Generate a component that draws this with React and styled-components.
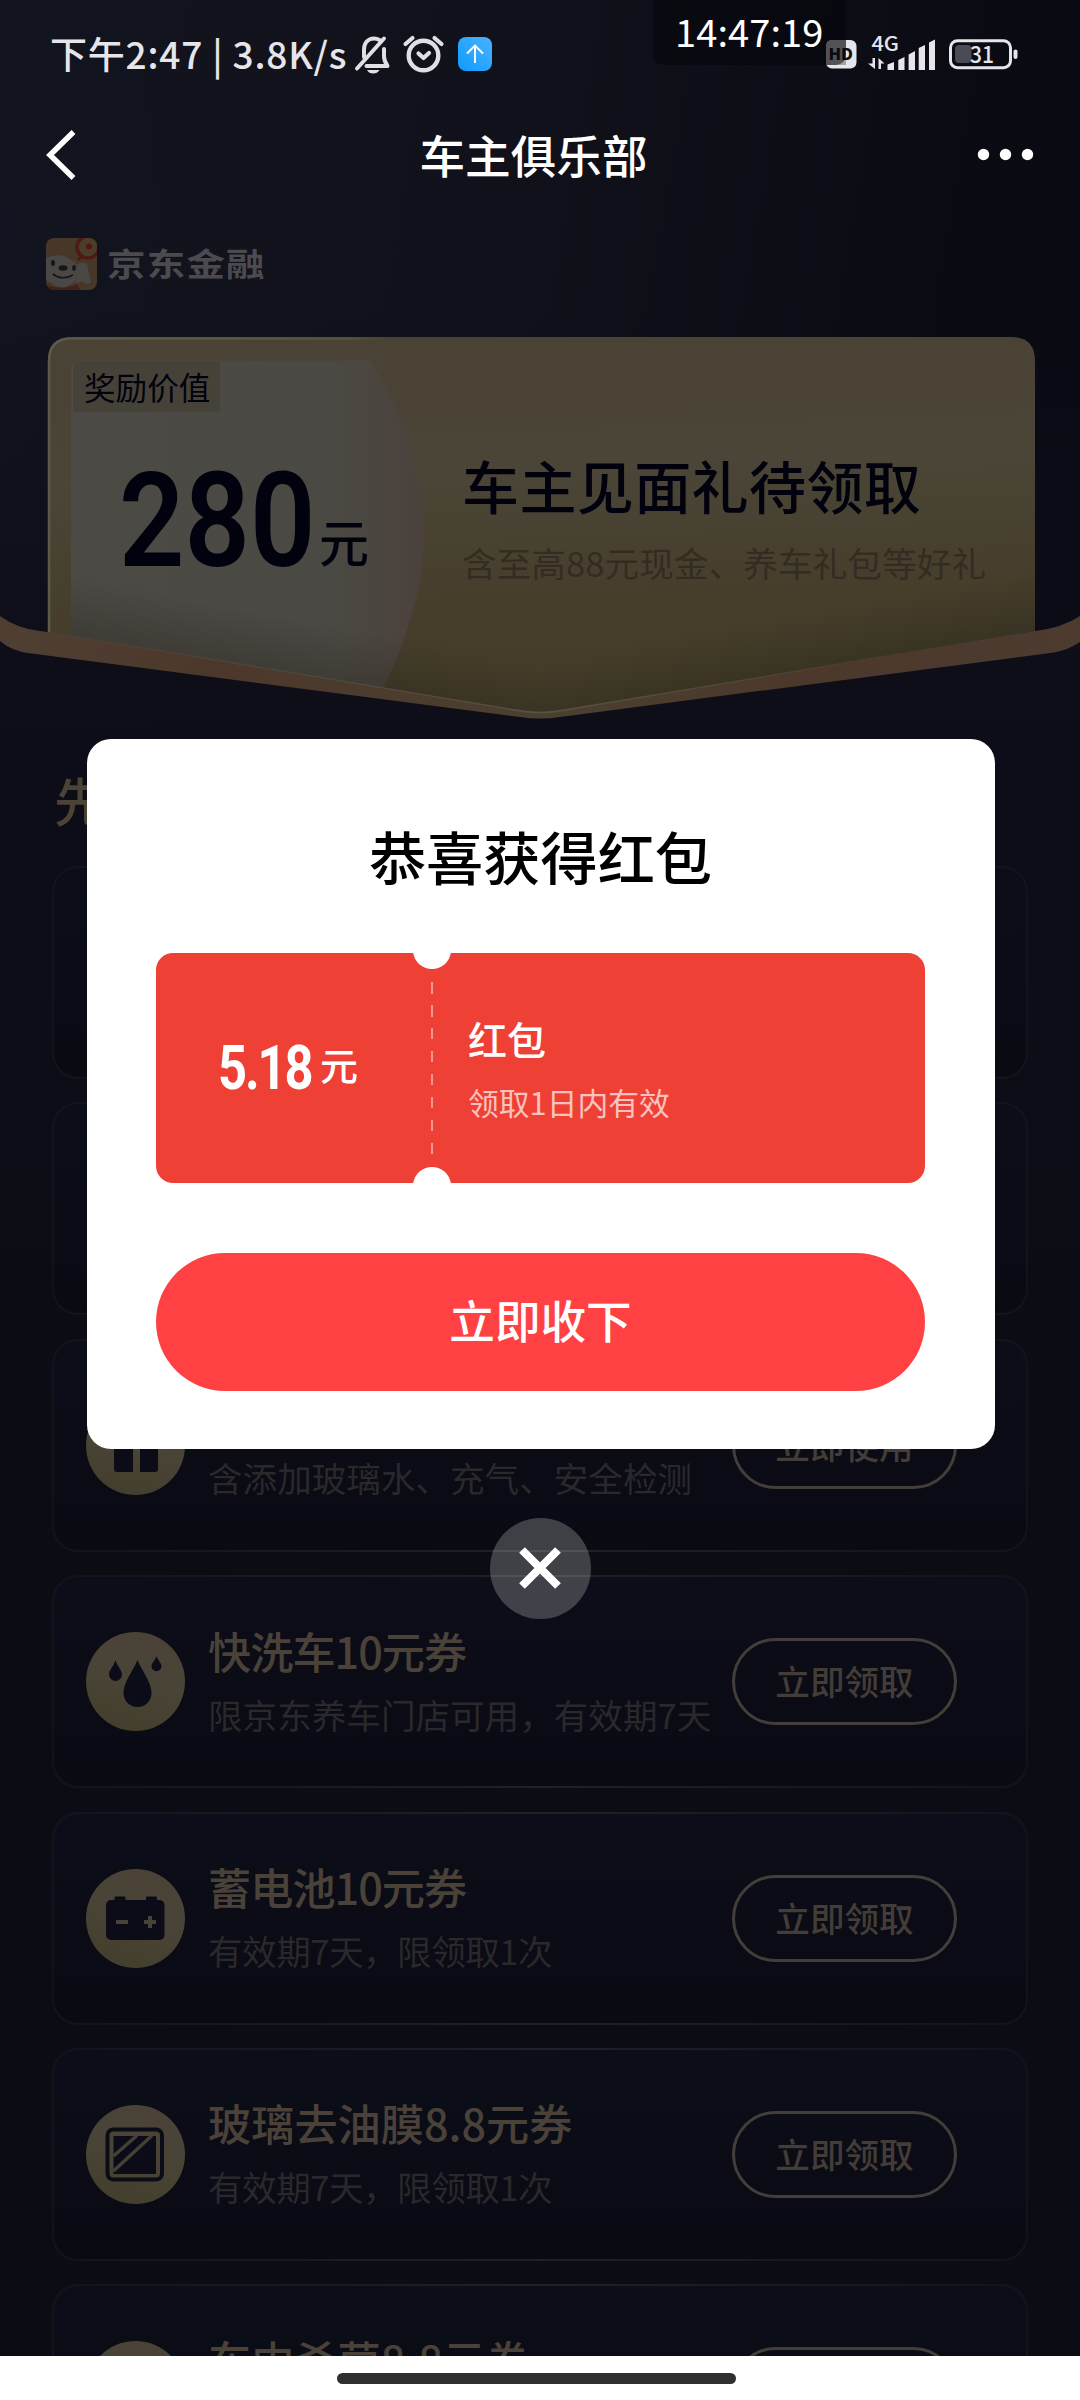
import React from "react";
import styled, { createGlobalStyle } from "styled-components";

const Global = createGlobalStyle`
  body { margin: 0; background: #0b0c14; }
  * { box-sizing: border-box; }
  #root { font-family: "Noto Sans CJK SC", sans-serif; }
`;

const Screen = styled.div`
  position: relative;
  display: flex;
  flex-direction: column;
  width: 1080px;
  height: 2400px;
  overflow: hidden;
  background:
    radial-gradient(ellipse 220px 400px at 0 220px, rgba(14, 20, 44, 0.2), transparent),
    linear-gradient(180deg, rgba(13, 14, 24, 0) 300px, #0c0d18 760px, #0b0c14 1300px),
    linear-gradient(100deg, #13141e 0%, #10111a 45%, #090a12 85%) 0 0 / 100% 800px no-repeat;
  & > * { flex-shrink: 0; }
`;

const StatusBar = styled.header`
  display: flex;
  align-items: center;
  height: 110px;
  padding: 0 50px;
  color: #e6e6ea;
`;
const StatusText = styled.span`
  width: 300px;
  padding-bottom: 4px;
  font-size: 37px;
  font-weight: 500;
  line-height: 40px;
  letter-spacing: ${(p) => p.$track || 0}px;
  white-space: nowrap;
`;
const StatusIcons = styled.div`
  display: flex;
  flex: none;
  align-items: center;
  margin-left: ${(p) => p.$ml}px;
`;
const Clock = styled.div`
  position: absolute;
  left: 653px;
  top: 0;
  width: 193px;
  height: 65px;
  padding-left: 22px;
  border-radius: 0 0 10px 10px;
  background: rgba(3, 4, 10, 0.5);
  color: #fff;
  font-size: 38px;
  line-height: 62px;
  letter-spacing: 0.1px;
  white-space: nowrap;
`;

const NavBar = styled.nav`
  display: flex;
  align-items: center;
  height: 90px;
  padding: 0 46px;
`;
const NavTitle = styled.h1`
  flex: 1;
  margin: 0 0 3px 15px;
  color: #fff;
  font-size: 45.6px;
  font-weight: 500;
  line-height: 86px;
  text-align: center;
`;

const Brand = styled.div`
  display: flex;
  align-items: center;
  gap: 10px;
  height: 52px;
  margin: 38px 0 47px 46px;
`;
const BrandName = styled.span`
  color: #4b4b4f;
  font-size: 38.5px;
  font-weight: 700;
  line-height: 52px;
  letter-spacing: 1.2px;
  transform: translateY(-2px) scaleY(0.84);
`;

const Hero = styled.section`
  position: relative;
  display: grid;
  grid-template-columns: 391px 1fr;
  height: 383px;
  padding: 24px 45px 0 71px;
  color: #02020e;
`;
const HeroArt = styled.svg`
  position: absolute;
  left: 0;
  top: 0;
`;
const Reward = styled.div`
  position: relative;
  display: flex;
  flex-direction: column;
  align-items: flex-start;
`;
const RewardTag = styled.span`
  height: 51px;
  margin-left: 2px;
  padding: 0 10px 0 11px;
  background: rgba(67, 62, 50, 0.6);
  border-radius: 8px 0 4px 0;
  font-size: 31.6px;
  line-height: 50px;
`;
const RewardValue = styled.div`
  display: flex;
  align-items: flex-end;
  margin: 45px 0 0 48px;
  height: 130px;
`;
const Digits = styled.span`
  display: inline-block;
  width: ${(p) => p.$w}px;
  font-family: Roboto, sans-serif;
  font-size: ${(p) => p.$size}px;
  font-weight: ${(p) => p.$weight || 600};
  line-height: 1;
  letter-spacing: ${(p) => p.$track || 0}px;
  transform: scaleX(${(p) => p.$stretch});
  transform-origin: left;
  white-space: nowrap;
`;
const Yuan = styled.span`
  margin-bottom: ${(p) => p.$lift || 0}px;
  font-size: ${(p) => p.$size}px;
  font-weight: 500;
  line-height: 1;
`;
const HeroText = styled.div`
  position: relative;
  padding-top: 83px;
`;
const HeroTitle = styled.h2`
  margin: 0;
  font-size: 57px;
  font-weight: 500;
  line-height: 80px;
  letter-spacing: 0.4px;
  white-space: nowrap;
`;
const HeroSub = styled.p`
  margin: 13px 0 0;
  color: #342c22;
  font-size: 34.6px;
  line-height: 50px;
  letter-spacing: 0.1px;
  white-space: nowrap;
`;

const SectionTitle = styled.h3`
  margin: 39px 0 25px 54px;
  color: #4b4436;
  font-size: 52px;
  font-weight: 500;
  line-height: 82px;
`;
const List = styled.div`
  display: flex;
  flex-direction: column;
  gap: 23.4px;
  padding: 0 52px;
`;
const Card = styled.article`
  display: flex;
  align-items: center;
  flex: none;
  height: 213px;
  padding: 0 69px 0 32px;
  border: 2px solid transparent;
  border-radius: 26px;
  background:
    linear-gradient(180deg, #0b0d18, #0a0a13) padding-box,
    linear-gradient(90deg, #13131b, #212026 50%, #13131b) border-box;
`;
const IconDisc = styled.svg`
  flex: none;
  width: 99px;
  height: 99px;
`;
const CardBody = styled.div`
  flex: 1;
  min-width: 0;
  margin-left: 23px;
  white-space: nowrap;
`;
const CardTitle = styled.h4`
  margin: 0;
  color: #4a4238;
  font-size: 43.2px;
  font-weight: 500;
  line-height: 64px;
  letter-spacing: ${(p) => p.$track || 0}px;
`;
const CardSub = styled.p`
  margin: 0;
  color: #29282b;
  font-size: 34.6px;
  line-height: 64px;
  letter-spacing: ${(p) => p.$track || 0}px;
`;
const Pill = styled.button`
  flex: none;
  width: 225px;
  height: 87px;
  padding: 0 0 3px;
  border: 3px solid #433e39;
  border-radius: 44px;
  background: transparent;
  color: #433c37;
  font: 500 34.6px/78px "Noto Sans CJK SC", sans-serif;
`;

const HomeBar = styled.footer`
  position: absolute;
  left: 0;
  bottom: 0;
  display: flex;
  justify-content: center;
  width: 100%;
  height: 44px;
  padding-top: 17px;
  background: #fff;
  &::after {
    content: "";
    width: 399px;
    height: 11px;
    margin-right: 7px;
    border-radius: 6px;
    background: #303030;
  }
`;

const Overlay = styled.div`
  position: absolute;
  inset: 0;
  display: flex;
  flex-direction: column;
  align-items: center;
  padding-top: 739px;
`;
const Modal = styled.section`
  display: flex;
  flex-direction: column;
  width: 908px;
  height: 710px;
  margin-left: 2px;
  padding: 76px 70px 0 69px;
  border-radius: 24px;
  background: #fff;
`;
const ModalTitle = styled.h2`
  margin: 0;
  color: #000;
  font-size: 57.2px;
  font-weight: 500;
  line-height: 80px;
  text-align: center;
`;
const Coupon = styled.div`
  display: flex;
  height: 230px;
  margin-top: 58px;
  border-radius: 17px;
  color: #fff;
  background:
    radial-gradient(circle at 276px -3px, #fff 18.5px, transparent 19.5px),
    radial-gradient(circle at 276px 233px, #fff 18.5px, transparent 19.5px),
    #ef4035;
`;
const Amount = styled.div`
  display: flex;
  align-items: center;
  width: 275px;
  padding-left: 62px;
`;
const Perforation = styled.div`
  width: 2px;
  height: 174px;
  margin-top: 29px;
  background: repeating-linear-gradient(180deg, #f6968e 0 11.5px, transparent 11.5px 23px);
`;
const CouponInfo = styled.div`
  padding: 57px 0 0 35px;
`;
const CouponName = styled.div`
  font-size: 39px;
  font-weight: 500;
  line-height: 56px;
`;
const CouponTerm = styled.div`
  margin-top: 14px;
  color: #fac3bf;
  font-size: 30.8px;
  line-height: 44px;
`;
const Accept = styled.button`
  height: 138px;
  margin-top: 70px;
  padding: 0 0 6px;
  border: 0;
  border-radius: 69px;
  background: #ff4144;
  color: #fff;
  font: 500 45.6px/132px "Noto Sans CJK SC", sans-serif;
`;
const Close = styled.button`
  display: flex;
  align-items: center;
  justify-content: center;
  width: 101px;
  height: 101px;
  margin-top: 69px;
  padding: 0 0 2px;
  border: 0;
  border-radius: 50%;
  background: rgba(255, 255, 255, 0.22);
`;

const INK = "#0b0c18";
const glyphs = {
  gift: (
    <g fill={INK}>
      <rect x="25" y="29" width="49" height="15" rx="3" />
      <path d="M28 47h19v29H31q-3 0-3-3zM54 47h18v26q0 3-3 3H54z" />
    </g>
  ),
  wash: (
    <g fill={INK}>
      <path d="M51.500 28C56 39 65.500 50 65.500 61A14 14 0 0 1 37.500 61C37.500 50 47 39 51.500 28Z" />
      <path d="M29.500 28C31 34 36 38 36 42.500A6.500 6.500 0 0 1 23 42.500C23 38 28 34 29.500 28Z" />
      <path d="M70.500 24C71.500 28 75.500 31 75.500 34.300A5 5 0 0 1 65.500 34.300C65.500 31 69.500 28 70.500 24Z" />
    </g>
  ),
  battery: (
    <g fill={INK}>
      <rect x="20" y="31" width="58.500" height="40" rx="5" />
      <rect x="28.500" y="27.500" width="11" height="6" rx="1" />
      <rect x="60" y="27.500" width="11" height="6" rx="1" />
      <g fill="#4a4337">
        <rect x="30" y="51" width="12" height="4" />
        <rect x="58" y="51" width="12" height="4" />
        <rect x="62" y="47" width="4" height="12" />
      </g>
    </g>
  ),
  glass: (
    <g fill="none" stroke={INK}>
      <rect x="21.500" y="24.500" width="54.500" height="50" rx="6" strokeWidth="4" />
      <path d="M27.500 31h42.500v38h-42.500z" fill={INK} stroke="none" />
      <path d="M27.500 51L51 30.500M27.500 66L66 30.500" stroke="#454034" strokeWidth="3.500" />
    </g>
  ),
  none: null,
};

function Disc({ kind }) {
  return (
    <IconDisc viewBox="0 0 99 99">
      <defs>
        <linearGradient id={"disc-" + kind} x1="0.7" y1="0" x2="0.4" y2="1">
          <stop offset="0" stopColor="#4a4237" />
          <stop offset="0.5" stopColor="#4a4437" />
          <stop offset="1" stopColor="#443e2d" />
        </linearGradient>
      </defs>
      <circle cx="49.500" cy="49.500" r="49.500" fill={`url(#disc-${kind})`} />
      {glyphs[kind]}
    </IconDisc>
  );
}

const coupons = [
  { icon: "gift", title: "\u00a0", sub: "含添加玻璃水、充气、安全检测", action: "立即使用" },
  { icon: "wash", title: "快洗车10元券", sub: "限京东养车门店可用，有效期7天", action: "立即领取", track: -1 },
  { icon: "battery", title: "蓄电池10元券", sub: "有效期7天，限领取1次", action: "立即领取", track: -1, subTrack: -0.5 },
  { icon: "glass", title: "玻璃去油膜8.8元券", sub: "有效期7天，限领取1次", action: "立即领取", subTrack: -0.5 },
  { icon: "none", title: "车内杀菌8.8元券", sub: "\u00a0", action: "\u00a0" },
];

function LeftStatusIcons() {
  return (
    <svg width="142" height="70" viewBox="352 20 142 70" fill="none" stroke="#e0e0e4" strokeWidth="4">
      <path d="M384 38.500L357 68.500" strokeLinecap="round" />
      <path d="M364 57V50C364 43 368 38.500 374 38.500Q377 38.500 379.500 40M384 49V56Q384 61 387.500 66H366.500" strokeLinejoin="round" strokeLinecap="round" />
      <path d="M367 70H379.500Q377.500 73.500 373 73.500Q369 73.500 367 70Z" fill="#e0e0e4" stroke="none" />
      <circle cx="423.500" cy="55.500" r="14.800" strokeWidth="4.400" />
      <path d="M418.500 53.500L423.500 58L429 53M405.500 44L412.500 38M441.500 44L434.500 38" strokeWidth="4.200" strokeLinecap="round" strokeLinejoin="round" />
      <linearGradient id="up" x1="1" y1="0" x2="0" y2="1">
        <stop offset="0" stopColor="#4fb0ff" />
        <stop offset="1" stopColor="#0a9cff" />
      </linearGradient>
      <rect x="458" y="37" width="34" height="34" rx="8" fill="url(#up)" stroke="none" />
      <path d="M475 63V45.500M467 53.500L475 45.500L483 53.500" stroke="#fff" strokeWidth="1.900" />
    </svg>
  );
}

const SvgLabel = styled.text`
  font-family: "Noto Sans CJK SC", sans-serif;
  font-weight: ${(p) => p.$w || 500};
  font-size: ${(p) => p.$s}px;
  stroke: none;
`;

function RightStatusIcons() {
  return (
    <svg width="198" height="70" viewBox="824 20 198 70" fill="#e6e6ea">
      <rect x="826" y="40" width="30.500" height="28.500" rx="6" />
      <path d="M832 40H846V65H826V46Q826 40 832 40Z" fill="#a3a3a3" />
      <SvgLabel x="828.500" y="60" $s="16" $w={900} fill="#101018" textLength="24.500" lengthAdjust="spacingAndGlyphs">HD</SvgLabel>
      <SvgLabel x="871.500" y="51" $s="20" textLength="27.500" lengthAdjust="spacingAndGlyphs">4G</SvgLabel>
      <path d="M875 58V69L868 63.500H872.500V58ZM878.500 69V58L884.500 63.500H881V69Z" />
      <path d="M887.500 70V64.500L894 62V70ZM898.300 70V60L904.500 57V70ZM908.600 70V54.500L915 51V70ZM918.700 70V48L925 45V70ZM929 70V42.500L935 39.500V70Z" />
      <rect x="950.500" y="40.700" width="60" height="27" rx="7" fill="none" stroke="#e6e6ea" strokeWidth="3" />
      <rect x="955" y="45" width="16.500" height="18" rx="4" fill="#4b4b55" />
      <rect x="1013.500" y="49.500" width="4" height="9.500" rx="2" />
      <SvgLabel x="970" y="63" $s="23" textLength="24" lengthAdjust="spacingAndGlyphs">31</SvgLabel>
    </svg>
  );
}

function BrandMark() {
  return (
    <svg width="51" height="52" viewBox="0 0 51 52">
      <clipPath id="mark"><rect width="51" height="52" rx="8" /></clipPath>
      <g clipPath="url(#mark)">
        <rect width="51" height="52" fill="#473729" />
        <path d="M0 20Q8 16 18 18L29 24Q32 30 30 42Q22 52 10 48L0 42Z" fill="#4a4745" />
        <path d="M31 26Q38 24 41 26L45 44Q40 48 36 43L30 46Z" fill="#4a4745" />
        <path d="M0 47Q16 53 31 46L34 52H0Z" fill="#43201a" />
        <ellipse cx="17" cy="30" rx="4.500" ry="2.800" fill="#171515" />
        <ellipse cx="7" cy="25" rx="2" ry="3" fill="#171515" />
        <ellipse cx="28" cy="30" rx="1.800" ry="3" fill="#171515" />
        <path d="M7 36Q16 43 27 37" fill="none" stroke="#171515" strokeWidth="1.600" />
        <circle cx="42" cy="9" r="11" fill="#4a3e2a" stroke="#4f1a13" strokeWidth="3.500" />
        <circle cx="43" cy="8.500" r="3" fill="#541810" />
        <path d="M36 18L32 22" stroke="#4f1a13" strokeWidth="3" />
      </g>
    </svg>
  );
}

function HeroBackdrop() {
  return (
    <HeroArt width="1080" height="383" viewBox="0 337 1080 383">
      <defs>
        <linearGradient id="gold" x1="0.4" y1="0" x2="0.5" y2="1">
          <stop offset="0" stopColor="#4a4234" />
          <stop offset="0.35" stopColor="#4a4537" />
          <stop offset="0.7" stopColor="#463e2b" />
          <stop offset="1" stopColor="#433c28" />
        </linearGradient>
        <linearGradient id="panel" x1="0" y1="0" x2="1" y2="0">
          <stop offset="0" stopColor="#4b4a44" />
          <stop offset="0.75" stopColor="#4b4943" />
          <stop offset="1" stopColor="#4b413d" />
        </linearGradient>
        <linearGradient id="rim" gradientUnits="userSpaceOnUse" x1="48" y1="0" x2="1035" y2="0">
          <stop offset="0" stopColor="#5c5a4c" />
          <stop offset="0.3" stopColor="#59543f" />
          <stop offset="0.34" stopColor="#59543f" stopOpacity="0" />
        </linearGradient>
        <linearGradient id="shadeL" gradientUnits="userSpaceOnUse" x1="300" y1="674" x2="310" y2="620">
          <stop offset="0" stopColor="#201e16" stopOpacity="0.3" />
          <stop offset="1" stopColor="#201e16" stopOpacity="0" />
        </linearGradient>
        <linearGradient id="shadeR" gradientUnits="userSpaceOnUse" x1="780" y1="674" x2="770" y2="620">
          <stop offset="0" stopColor="#201e16" stopOpacity="0.3" />
          <stop offset="1" stopColor="#201e16" stopOpacity="0" />
        </linearGradient>
        <linearGradient id="band" x1="0" y1="0" x2="1" y2="0">
          <stop offset="0" stopColor="#4f3f33" />
          <stop offset="0.2" stopColor="#4c382b" />
          <stop offset="0.5" stopColor="#4b4030" />
          <stop offset="0.75" stopColor="#4c382b" />
          <stop offset="1" stopColor="#4d3b30" />
        </linearGradient>
        <linearGradient id="edge" gradientUnits="userSpaceOnUse" x1="48" y1="0" x2="1035" y2="0">
          <stop offset="0" stopColor="#5a5040" stopOpacity="0.3" />
          <stop offset="0.5" stopColor="#5a5444" />
          <stop offset="1" stopColor="#5a5040" stopOpacity="0.1" />
        </linearGradient>
      </defs>
      <path d="M48 720V361Q48 337 72 337H1011Q1035 337 1035 361V720Z" fill="url(#gold)" />
      <path d="M49 640V361Q49 338.500 72 338.500H1011" fill="none" stroke="url(#rim)" strokeWidth="2.500" />
      <path d="M71 720V371Q71 360.500 82 360.500H371Q395 402 406 432Q424 485 424 530Q424 580 407 630Q398 658 383 688V720Z" fill="url(#panel)" />
      <path d="M71 560H540V714L71 636Z" fill="url(#shadeL)" />
      <path d="M1035 560H540V714L1035 631Z" fill="url(#shadeR)" />
      <path d="M0 616Q18 629 40 631L48 632L515 710Q540 715 565 710L1035 631Q1062 628 1080 616V720H0Z" fill="#0d0e18" />
      <path d="M0 616Q18 629 40 631L48 632L515 710Q540 715 565 710L1035 631Q1062 628 1080 616V642Q1068 650 1054 652.500L560 717Q540 720 520 717L28 653Q12 651 0 641Z" fill="url(#band)" />
      <path d="M48 632L515 710Q540 715 565 710L1035 631" fill="none" stroke="url(#edge)" strokeWidth="1.300" />
    </HeroArt>
  );
}

export default function App() {
  return (
    <Screen>
      <Global />
      <StatusBar>
        <StatusText $track={0.8}>下午2:47 | 3.8K/s</StatusText>
        <StatusIcons $ml={2}><LeftStatusIcons /></StatusIcons>
        <StatusIcons $ml={330}><RightStatusIcons /></StatusIcons>
      </StatusBar>
      <Clock>14:47:19</Clock>
      <NavBar>
        <svg width="32" height="52" viewBox="0 0 32 52" fill="none" stroke="#fff" strokeWidth="5.500">
          <path d="M27.500 3L4 26L27.500 49" />
        </svg>
        <NavTitle>车主俱乐部</NavTitle>
        <svg width="60" height="14" viewBox="0 0 60 14" fill="#fff">
          <circle cx="9.500" cy="6.500" r="5.700" />
          <circle cx="31.500" cy="6.500" r="5.700" />
          <circle cx="53.500" cy="6.500" r="5.700" />
        </svg>
      </NavBar>
      <Brand>
        <BrandMark />
        <BrandName>京东金融</BrandName>
      </Brand>
      <Hero>
        <HeroBackdrop />
        <Reward>
          <RewardTag>奖励价值</RewardTag>
          <RewardValue>
            <Digits $size={131} $w={200} $stretch={0.875}>280</Digits>
            <Yuan $size={50} $lift={22}>元</Yuan>
          </RewardValue>
        </Reward>
        <HeroText>
          <HeroTitle>车主见面礼待领取</HeroTitle>
          <HeroSub>含至高88元现金、养车礼包等好礼</HeroSub>
        </HeroText>
      </Hero>
      <SectionTitle>先</SectionTitle>
      <List>
        <Card />
        <Card />
        {coupons.map((c) => (
          <Card key={c.icon}>
            <Disc kind={c.icon} />
            <CardBody>
              <CardTitle $track={c.track}>{c.title}</CardTitle>
              <CardSub $track={c.subTrack}>{c.sub}</CardSub>
            </CardBody>
            <Pill>{c.action}</Pill>
          </Card>
        ))}
      </List>
      <HomeBar />
      <Overlay>
        <Modal>
          <ModalTitle>恭喜获得红包</ModalTitle>
          <Coupon>
            <Amount>
              <Digits $size={61} $w={102} $stretch={0.83} $weight={700} $track={-2.5}>5.18</Digits>
              <Yuan $size={38} $lift={8}>元</Yuan>
            </Amount>
            <Perforation />
            <CouponInfo>
              <CouponName>红包</CouponName>
              <CouponTerm>领取1日内有效</CouponTerm>
            </CouponInfo>
          </Coupon>
          <Accept>立即收下</Accept>
        </Modal>
        <Close aria-label="关闭">
          <svg width="44" height="44" viewBox="0 0 44 44" stroke="#fff" strokeWidth="8">
            <path d="M4 4L40 40M40 4L4 40" />
          </svg>
        </Close>
      </Overlay>
    </Screen>
  );
}
